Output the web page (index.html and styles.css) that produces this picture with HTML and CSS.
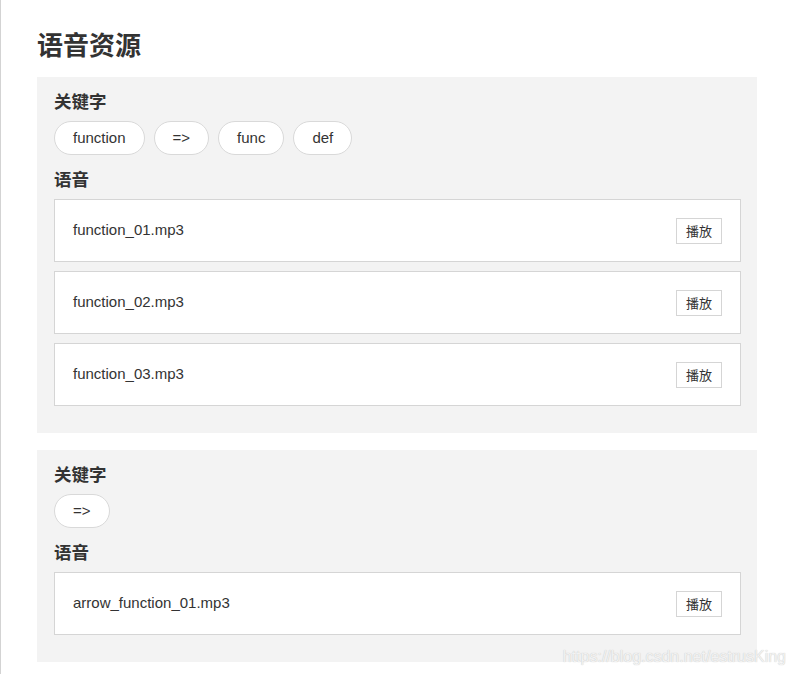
FILE: index.html
```html
<!DOCTYPE html>
<html lang="zh-CN">
<head>
    <meta charset="UTF-8">
    <meta name="viewport" content="width=device-width, initial-scale=1.0">
    <title>语音资源</title>
    <link rel="stylesheet" href="styles.css">
</head>
<body>

<div class="container">
    <h2>语音资源</h2>

    <!-- Resource group: function -->
    <div class="group">
        <div class="label">关键字</div>
        <div class="tags">
            <span class="tag">function</span>
            <span class="tag">=&gt;</span>
            <span class="tag">func</span>
            <span class="tag">def</span>
        </div>
        <div class="label label-audio">语音</div>
        <div class="audio">
            <span class="file">function_01.mp3</span>
            <button class="play">播放</button>
        </div>
        <div class="audio">
            <span class="file">function_02.mp3</span>
            <button class="play">播放</button>
        </div>
        <div class="audio">
            <span class="file">function_03.mp3</span>
            <button class="play">播放</button>
        </div>
    </div>

    <!-- Resource group: arrow function -->
    <div class="group">
        <div class="label">关键字</div>
        <div class="tags">
            <span class="tag">=&gt;</span>
        </div>
        <div class="label label-audio">语音</div>
        <div class="audio">
            <span class="file">arrow_function_01.mp3</span>
            <button class="play">播放</button>
        </div>
    </div>
</div>

<div class="watermark">https://blog.csdn.net/estrusKing</div>

</body>
</html>
```

FILE: styles.css
```css
html, body {
    height: 100%;
}
body {
    margin: 0;
    border-left: 1px solid #d3d3d3;
    font-family: "Liberation Sans", Arial, "Noto Sans CJK SC", sans-serif;
    color: #333;
    background: #fff;
    overflow: hidden;
}
.container {
    width: 720px;
    padding: 26px 0 0 36px;
}
h2 {
    margin: 0 0 15px 0;
    font-family: "Noto Sans CJK SC", sans-serif;
    font-size: 26px;
    line-height: 36px;
    font-weight: bold;
    color: #333;
}
.group {
    background-color: #f3f3f3;
    padding: 12px 16px 27px 17px;
    margin-bottom: 17px;
}
.label {
    font-family: "Noto Sans CJK SC", sans-serif;
    font-size: 17.5px;
    font-weight: bold;
    line-height: 24px;
    margin-bottom: 8px;
}
.label-audio {
    margin-top: 12px;
}
.tags {
    display: flex;
    gap: 9px;
}
.tag {
    display: inline-block;
    height: 32px;
    line-height: 32px;
    padding: 0 18px;
    border: 1px solid #d9d9d9;
    border-radius: 17px;
    background: #fff;
    font-size: 15px;
}
.audio {
    display: flex;
    align-items: center;
    justify-content: space-between;
    height: 61px;
    padding: 0 18px;
    margin-bottom: 9px;
    background: #fff;
    border: 1px solid #d5d5d5;
    font-size: 15px;
}
.audio:last-child {
    margin-bottom: 0;
}
.file {
    margin-top: -2px;
}
.play {
    width: 46px;
    height: 26px;
    padding: 0;
    border: 1px solid #d5d5d5;
    background: #fff;
    color: #333;
    font-family: "Noto Sans CJK SC", sans-serif;
    font-size: 13px;
    cursor: pointer;
}
.watermark {
    position: absolute;
    right: 8px;
    bottom: 8px;
    font-size: 16px;
    color: #f2f2f2;
    text-shadow: 0 0 1px #bbb;
}
```
